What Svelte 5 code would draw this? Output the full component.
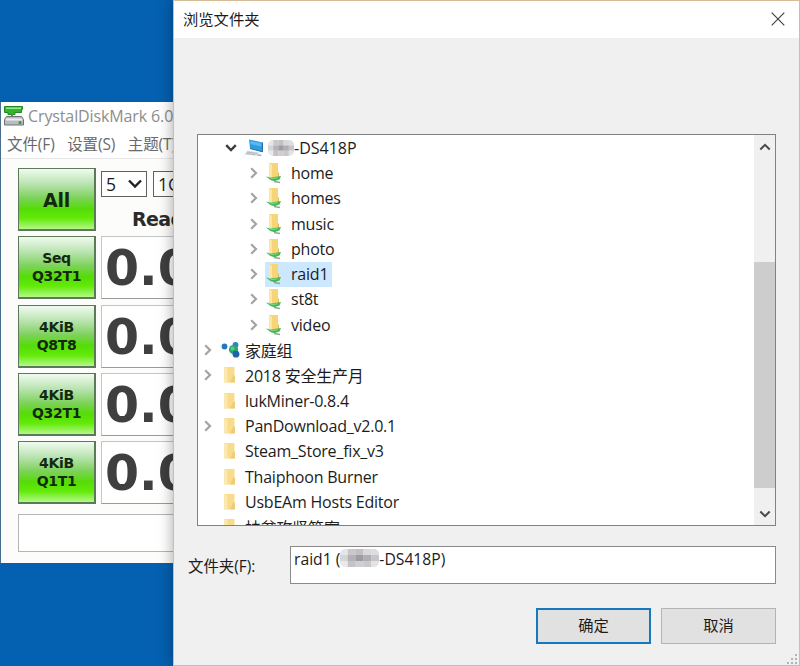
<script lang="ts">
  interface TreeItem {
    label: string;
    level: 0 | 1 | 2;
    icon: "computer" | "share" | "group" | "folder";
    arrow?: "open" | "closed";
  }

  const items: TreeItem[] = [
    { label: "-DS418P", level: 1, icon: "computer", arrow: "open" },
    { label: "home", level: 2, icon: "share", arrow: "closed" },
    { label: "homes", level: 2, icon: "share", arrow: "closed" },
    { label: "music", level: 2, icon: "share", arrow: "closed" },
    { label: "photo", level: 2, icon: "share", arrow: "closed" },
    { label: "raid1", level: 2, icon: "share", arrow: "closed" },
    { label: "st8t", level: 2, icon: "share", arrow: "closed" },
    { label: "video", level: 2, icon: "share", arrow: "closed" },
    { label: "家庭组", level: 0, icon: "group", arrow: "closed" },
    { label: "2018 安全生产月", level: 0, icon: "folder", arrow: "closed" },
    { label: "lukMiner-0.8.4", level: 0, icon: "folder" },
    { label: "PanDownload_v2.0.1", level: 0, icon: "folder", arrow: "closed" },
    { label: "Steam_Store_fix_v3", level: 0, icon: "folder" },
    { label: "Thaiphoon Burner", level: 0, icon: "folder" },
    { label: "UsbEAm Hosts Editor", level: 0, icon: "folder" },
    { label: "扶贫攻坚答案", level: 0, icon: "folder" },
  ];

  const tests = [
    ["Seq", "Q32T1"],
    ["4KiB", "Q8T8"],
    ["4KiB", "Q32T1"],
    ["4KiB", "Q1T1"],
  ];

  // grey blocks that cover the host name
  const mosaic = [
    "#e6e5e8", "#c9c7ca", "#c2c0c4", "#d9d8da", "#dddcde",
    "#d5d4d8", "#b5b2b6", "#9f9ca1", "#b2afb4", "#c6c5c9",
    "#e9e9ea", "#c5c3c7", "#cfced1", "#c9c8cb", "#e3e3e5",
  ];

  let selected = $state("raid1");
</script>

{#snippet blur(w: number, h: number)}
  <svg class="mosaic" width={w} height={h} viewBox="0 0 5 3" preserveAspectRatio="none">
    {#each mosaic as fill, i}
      <rect x={i % 5} y={Math.floor(i / 5)} width="1.03" height="1.03" {fill} />
    {/each}
  </svg>
{/snippet}

<div class="desktop">
  <section class="window cdm">
    <header class="cdm-title">
      <svg width="22" height="22" viewBox="0 0 22 22">
        <path d="M1.500 1.500h18v3h-1v3H12v2H5v-2H1.500z" fill="#35b52d" stroke="#1f8a22" />
        <path d="M3 3.200h15" stroke="#9bea8c" stroke-width="1.500" />
        <path d="M9 8v3" stroke="#4d9a48" stroke-width="2" />
        <path d="M3.500 11.500h15l2 3v5.500h-19v-5.500z" fill="#b9bcc0" stroke="#6d7075" />
        <path d="M3 14.500h16" stroke="#eceef0" stroke-width="2" />
        <circle cx="17" cy="17.500" r="1.500" fill="#3f9440" />
      </svg>
      <span>CrystalDiskMark 6.0</span>
    </header>
    <nav class="cdm-menu">
      <span>文件(F)</span>
      <span>设置(S)</span>
      <span>主题(T)</span>
    </nav>
    <div class="cdm-body">
      <div class="cdm-row">
        <button class="green all">All</button>
        <div class="cdm-options">
          <div class="selects">
            <div class="select">
              <span>5</span>
              <svg width="16" height="10" viewBox="0 0 16 10">
                <path d="M2 1.500l6 6 6-6" fill="none" stroke="#222" stroke-width="2.400" />
              </svg>
            </div>
            <div class="select size">1GiB</div>
          </div>
          <div class="read">Read [MB/s]</div>
        </div>
      </div>
      {#each tests as [name, queue]}
        <div class="cdm-row">
          <button class="green">{name}<br />{queue}</button>
          <div class="score">0.0</div>
        </div>
      {/each}
      <div class="comment"></div>
    </div>
  </section>

  <section class="window dialog">
    <header class="dialog-title">
      <span>浏览文件夹</span>
      <button class="close" aria-label="关闭">
        <svg width="14" height="14" viewBox="0 0 14 14">
          <path d="M.7.7l12.600 12.600M13.300.7L.7 13.300" stroke="#444" stroke-width="1.200" />
        </svg>
      </button>
    </header>

    <div class="tree">
      <div class="tree-items">
        {#each items as item}
          <div class="item level-{item.level}">
            <span class="arrow">
              {#if item.arrow === "open"}
                <svg width="12" height="8" viewBox="0 0 12 8">
                  <path d="M1.200 1.200L6 6l4.800-4.800" fill="none" stroke="#3c3c3c" stroke-width="2.400" />
                </svg>
              {:else if item.arrow === "closed"}
                <svg width="8" height="12" viewBox="0 0 8 12">
                  <path d="M1.200 1.200L6 6l-4.800 4.800" fill="none" stroke="#a3a3a3" stroke-width="2.200" />
                </svg>
              {/if}
            </span>
            <button class="node" class:is-selected={item.label === selected} onclick={() => (selected = item.label)}>
              {#if item.icon === "computer"}
                <svg class="icon" width="22" height="20" viewBox="0 0 22 20">
                  <path d="M5 1.500l13.500 3v9.300L6 10.500z" fill="#2f9be0" />
                  <path d="M6.200 3l11 2.500v3L6.500 6z" fill="#5cb9f0" />
                  <path d="M18.500 4.500v9.300L6 10.500" fill="none" stroke="#246ca8" />
                  <path d="M3.500 12.500l12 2-3 3.200-12-1.200z" fill="#d9dde1" />
                  <path d="M3 14l10 1.500M2 15.500l9 1.200" stroke="#a9afb6" stroke-width=".8" />
                  <path d="M14 16l4 .8-1.500 1.400-4-.6z" fill="#aeb6bf" />
                </svg>
                {@render blur(26, 16)}
              {:else if item.icon === "share"}
                <svg class="icon" width="18" height="22" viewBox="0 0 18 22">
                  <path d="M4 1h9v14H4z" fill="#f6d478" />
                  <path d="M4 1l3 1.500v13L4 15z" fill="#fbe6a6" />
                  <path d="M13 10l1 1v4h-1z" fill="#e2b54e" />
                  <path d="M1 14.500l5 1 10-1.500-1.500 3.500-5 1.700-4-1.200z" fill="#45b854" />
                  <path d="M3.500 15.200l4 1.300 5-.8" fill="none" stroke="#8bdc91" />
                  <path d="M9 19.500l6 1" stroke="#8fa892" stroke-width="1.500" />
                </svg>
              {:else if item.icon === "group"}
                <svg class="icon" width="20" height="18" viewBox="0 0 20 18">
                  <circle cx="3.500" cy="5.500" r="2.900" fill="#2377bd" />
                  <circle cx="14.500" cy="4" r="2.900" fill="#2486c8" />
                  <circle cx="12.500" cy="8.500" r="4.600" fill="#27a76b" />
                  <circle cx="11.500" cy="7.500" r="2" fill="#5bc98c" />
                  <circle cx="15" cy="13.200" r="3.400" fill="#1f62ae" />
                </svg>
              {:else}
                <svg class="icon" width="16" height="18" viewBox="0 0 16 18">
                  <path d="M3 1h10.500v15.500H3z" fill="#f8dc8c" />
                  <path d="M3 1l3.500 1v14.700L3 16z" fill="#fbe8b0" />
                  <path d="M12.500 9l1.500 1v6.500H9z" fill="#efcc76" />
                </svg>
              {/if}
              <span class="label">{item.label}</span>
            </button>
          </div>
        {/each}
      </div>
      <div class="scrollbar">
        <svg width="12" height="8" viewBox="0 0 12 8">
          <path d="M1.300 6.500L6 1.800l4.700 4.700" fill="none" stroke="#484848" stroke-width="2" />
        </svg>
        <div class="track"><div class="thumb"></div></div>
        <svg width="12" height="8" viewBox="0 0 12 8">
          <path d="M1.300 1.500L6 6.200l4.700-4.700" fill="none" stroke="#484848" stroke-width="2" />
        </svg>
      </div>
    </div>

    <div class="field">
      <span class="field-label">文件夹(F):</span>
      <div class="field-box">
        <span>raid1 (</span>{@render blur(39, 18)}<span>-DS418P)</span>
      </div>
    </div>

    <footer class="actions">
      <button class="action primary">确定</button>
      <button class="action">取消</button>
    </footer>

    <svg class="grip" width="11" height="11" viewBox="0 0 11 11">
      <path
        d="M8 0h2v2H8zM4 4h2v2H4zM8 4h2v2H8zM0 8h2v2H0zM4 8h2v2H4zM8 8h2v2H8z"
        fill="#b4b4b4"
      />
    </svg>
  </section>
</div>

<style>
  .desktop {
    position: relative;
    width: 800px;
    height: 666px;
    overflow: hidden;
    background: #0460b0;
    font-family: "Open Sans", "Noto Sans CJK SC", sans-serif;
    font-size: 16px;
    color: #1c1c1c;
  }
  button {
    font: inherit;
    letter-spacing: inherit;
    color: inherit;
    padding: 0;
    margin: 0;
    border: 0;
    border-radius: 0;
    background: none;
  }
  svg {
    display: block;
    flex: none;
  }
  .window {
    position: absolute;
    box-sizing: border-box;
    display: flex;
    flex-direction: column;
    white-space: nowrap;
  }

  /* CrystalDiskMark, behind the dialog */
  .cdm {
    left: 0;
    top: 102px;
    width: 340px;
    height: 461px;
    background: #fcfcfb;
    border: 1px solid #4a6f8c;
    border-top: 0;
    border-bottom: 0;
  }
  .cdm-title {
    display: flex;
    align-items: center;
    gap: 3px;
    height: 28px;
    padding-left: 2px;
    background: #fff;
    color: #8d8d8d;
    letter-spacing: -0.12px;
  }
  .cdm-menu {
    display: flex;
    align-items: center;
    gap: 12.5px;
    height: 26px;
    padding: 0 0 2px 6px;
    background: #fff;
    border-bottom: 1px solid #e8e8e8;
    color: #6a6a6a;
    font-size: 15.5px;
    letter-spacing: -0.1px;
  }
  .cdm-body {
    display: flex;
    flex-direction: column;
    gap: 5.3px;
    padding: 9px 17px;
  }
  .cdm-row {
    display: flex;
    gap: 5px;
    height: 63px;
  }
  .green {
    flex: none;
    box-sizing: border-box;
    width: 78px;
    height: 63px;
    border: 2px solid #5d7a58;
    border-top-width: 1px;
    border-left-width: 1px;
    background: linear-gradient(#f0fbef 0%, #b9e3b0 25%, #7ed25c 48%, #55dc08 66%, #62ea08 82%, #b4f888 100%);
    font: bold 14px/18px "DejaVu Sans", sans-serif;
    letter-spacing: -0.3px;
    color: #14280f;
    text-align: center;
  }
  .all {
    padding-top: 2px;
    font-size: 19px;
  }
  .cdm-options {
    flex: 1;
  }
  .selects {
    display: flex;
    gap: 6px;
    padding-top: 3px;
  }
  .select {
    box-sizing: border-box;
    width: 46px;
    height: 26px;
    border: 1.5px solid #606060;
    background: #fff;
    display: flex;
    align-items: center;
    justify-content: space-between;
    padding: 0 3px 0 4px;
    font-size: 17.5px;
  }
  .size {
    width: 80px;
  }
  .read {
    padding: 10px 0 0 31px;
    font: bold 19px/24px "DejaVu Sans", sans-serif;
    letter-spacing: -0.6px;
    color: #2b2b2b;
  }
  .score {
    flex: 1;
    box-sizing: border-box;
    border: 1px solid #c4c4c4;
    border-bottom-color: #9a9a9a;
    background: #fff;
    padding-left: 3px;
    font: bold 49px/64px "DejaVu Sans", sans-serif;
    color: #3f3f3f;
  }
  .comment {
    height: 36px;
    margin-top: 5px;
    border: 1px solid #b5b5b5;
    background: #fff;
  }

  /* folder picker */
  .dialog {
    left: 173px;
    top: 0;
    width: 627px;
    height: 666px;
    background: #f0f0f0;
    border: 1px solid #d5bd98;
    box-shadow: 0 0 14px rgba(0, 0, 0, 0.35);
  }
  .dialog-title {
    display: flex;
    align-items: center;
    justify-content: space-between;
    box-sizing: border-box;
    height: 37px;
    padding: 0 14px 2px 9px;
    background: #fff;
    font-size: 15.3px;
  }
  .dialog-title span {
    padding-bottom: 2px;
  }
  .tree {
    display: flex;
    box-sizing: border-box;
    width: 579px;
    height: 392px;
    margin: 96px 0 0 23px;
    border: 1px solid #828282;
    background: #fff;
  }
  .tree-items {
    flex: 1;
    overflow: hidden;
    letter-spacing: -0.22px;
  }
  .item {
    display: flex;
    align-items: center;
    height: 25.3px;
  }
  .level-0 {
    padding-left: 3px;
  }
  .level-1 {
    padding-left: 26px;
    letter-spacing: 0;
  }
  .level-2 {
    padding-left: 49px;
  }
  .arrow {
    width: 14px;
    display: flex;
    justify-content: center;
  }
  .node {
    display: flex;
    align-items: center;
    height: 25px;
    margin-left: 4px;
    padding-right: 4px;
    text-align: left;
  }
  .level-0 .icon {
    margin-left: 2px;
  }
  .level-0 .icon[width="16"] {
    margin-right: 8px;
  }
  .level-0 .icon[width="20"] {
    margin-right: 4px;
  }
  .level-2 .icon {
    margin-right: 8px;
  }
  .level-1 .icon {
    margin: 0 2px;
  }
  .is-selected {
    background: #cce8ff;
  }
  .mosaic {
    border-radius: 5px;
  }
  .scrollbar {
    display: flex;
    flex-direction: column;
    align-items: center;
    width: 21px;
    padding: 8px 0 7px;
    box-sizing: border-box;
    background: #f0f0f0;
  }
  .track {
    flex: 1;
    width: 100%;
    padding: 111px 0 22px;
    box-sizing: border-box;
  }
  .thumb {
    height: 226px;
    background: #cdcdcd;
  }
  .field {
    display: flex;
    align-items: center;
    margin: 20px 0 0 14px;
  }
  .field-label {
    width: 102px;
    font-size: 15.4px;
    box-sizing: border-box;
  }
  .field-box {
    display: flex;
    box-sizing: border-box;
    width: 486px;
    height: 38px;
    padding: 2px 3px;
    border: 1px solid #8a8a8a;
    background: #fff;
    font-size: 15.7px;
    line-height: 20px;
  }
  .actions {
    display: flex;
    gap: 10px;
    margin: 24px 0 0 362px;
  }
  .action {
    box-sizing: border-box;
    width: 115px;
    height: 36px;
    padding-bottom: 4px;
    border: 1px solid #b4b4b4;
    background: #e1e1e1;
    font-size: 15.3px;
  }
  .primary {
    border: 2px solid #1878bd;
  }
  .grip {
    position: absolute;
    right: 1px;
    bottom: 0;
  }
</style>
